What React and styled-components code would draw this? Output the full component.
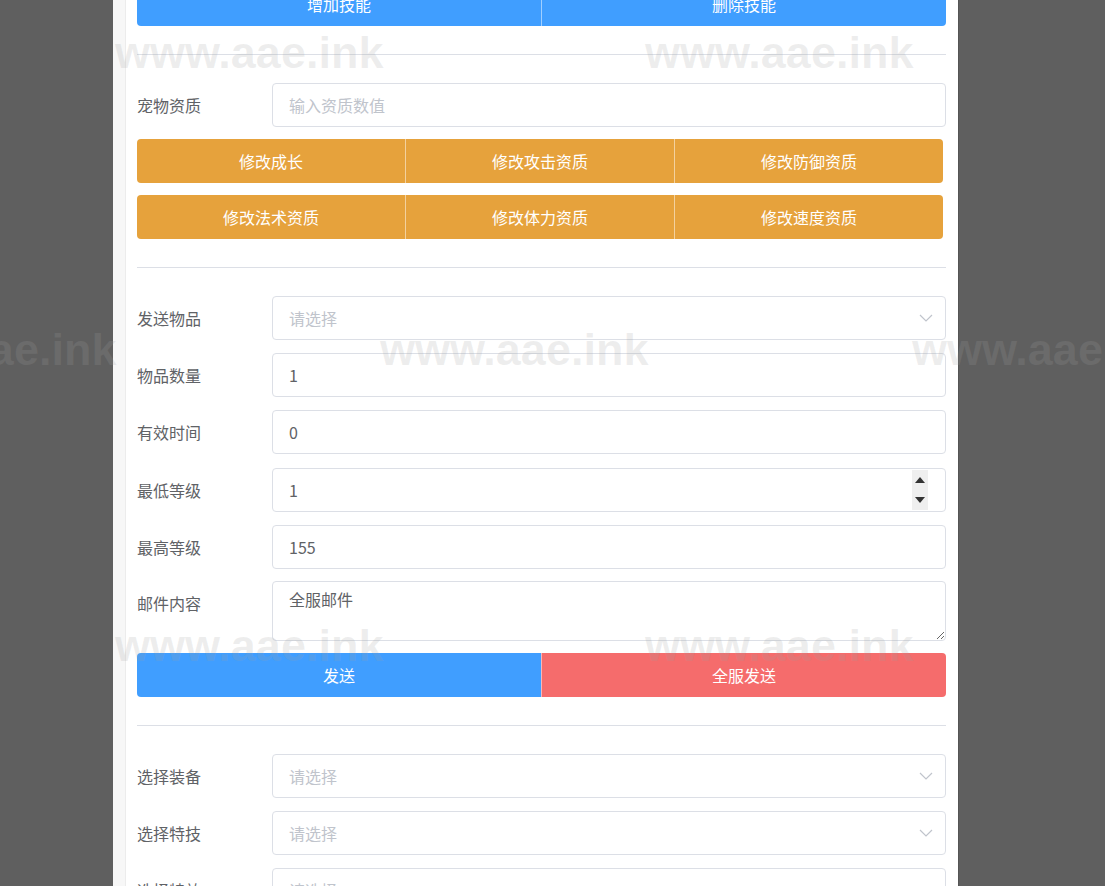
import React from "react";
import styled, { createGlobalStyle } from "styled-components";

const GlobalStyle = createGlobalStyle`
	html, body {
		margin: 0;
		padding: 0;
		overflow: hidden;
	}
	body {
		font-family: "Noto Sans CJK SC", "Noto Sans", sans-serif;
		font-size: 16px;
		color: #606266;
	}
	* {
		box-sizing: border-box;
	}
`;

const Page = styled.div`
	position: relative;
	height: 886px;
	overflow: hidden;
	background-color: #5f5f5f;
	padding-left: 113px;
`;

const Panel = styled.div`
	width: 845px;
	height: 100%;
	overflow: hidden;
	background-color: #f7f7f7;
	padding-left: 12px;
	box-shadow: 1px 0 0 #555;
`;

const Content = styled.div`
	height: calc(100% + 18px);
	background-color: #fff;
	border-left: 1px solid #ececec;
	padding: 0 12px 0 11px;
	margin-top: -18px;
`;

const ButtonGroup = styled.div`
	display: flex;
	width: ${(p) => (p.$narrow ? "calc(100% - 3px)" : "100%")};
	margin-top: ${(p) => p.$top || 0}px;
`;

const tones = {
	primary: "#409eff",
	warning: "#e6a23c",
	danger: "#f56c6c",
};

const Button = styled.button`
	flex: 1;
	height: 44px;
	border: none;
	border-left: 1px solid rgba(255, 255, 255, 0.5);
	background-color: ${(p) => tones[p.$tone]};
	color: #fff;
	font-family: inherit;
	font-size: 16px;
	padding: 0;
	cursor: pointer;

	&:first-child {
		border-left: none;
		border-radius: 4px 0 0 4px;
	}
	&:last-child {
		border-radius: 0 4px 4px 0;
	}
`;

const Divider = styled.div`
	height: 1px;
	background-color: #dcdfe6;
	margin: 28px 0 28px;
`;

const Row = styled.div`
	display: flex;
	align-items: ${(p) => (p.$top ? "flex-start" : "center")};
	margin-bottom: ${(p) => (p.$gap === undefined ? 13 : p.$gap)}px;
`;

const Label = styled.div`
	width: 135px;
	flex-shrink: 0;
	line-height: 44px;
	color: #606266;
	font-size: 16px;
`;

const Field = styled.div`
	flex: 1;
	display: flex;
	align-items: center;
	height: ${(p) => p.$height || 44}px;
	border: 1px solid #dcdfe6;
	border-radius: 4px;
	background-color: #fff;
	padding: 0 ${(p) => (p.$select ? 12 : 16)}px 0 16px;
`;

const Input = styled.input`
	flex: 1;
	min-width: 0;
	height: 100%;
	border: none;
	outline: none;
	padding: 0;
	font-family: inherit;
	font-size: 16px;
	color: #606266;
	background: transparent;

	&::placeholder {
		color: #c0c4cc;
	}
`;

const Placeholder = styled.span`
	flex: 1;
	color: #c0c4cc;
`;

const Spinner = styled.div`
	display: flex;
	flex-direction: column;
	justify-content: space-around;
	align-items: center;
	width: 16px;
	height: 40px;
	margin-right: 1px;
	background-color: #efefef;
`;

const Arrow = styled.span`
	width: 0;
	height: 0;
	border-left: 5px solid transparent;
	border-right: 5px solid transparent;
	${(p) => (p.$down ? "border-top: 6px solid #333;" : "border-bottom: 6px solid #333;")}
`;

const TextArea = styled.textarea`
	flex: 1;
	height: 60px;
	border: 1px solid #dcdfe6;
	border-radius: 4px;
	padding: 5px 16px;
	font-family: inherit;
	font-size: 16px;
	line-height: 1.5;
	color: #606266;
	outline: none;
	resize: vertical;
`;

const Watermarks = styled.div`
	position: absolute;
	inset: 0;
	pointer-events: none;
`;

const Mark = styled.span`
	position: absolute;
	font-family: "Liberation Sans", Arial, sans-serif;
	font-weight: bold;
	font-size: 45px;
	line-height: 1;
	color: rgba(159, 159, 159, 0.19);
	white-space: nowrap;
`;

const Chevron = () => (
	<svg width="14" height="8" viewBox="0 0 14 8" fill="none">
		<path d="M1 1l6 6 6-6" stroke="#c0c4cc" strokeWidth="1.2" />
	</svg>
);

const Select = ({ text = "请选择" }) => (
	<Field $select>
		<Placeholder>{text}</Placeholder>
		<Chevron />
	</Field>
);

const marks = [
	[115, 30],
	[645, 30],
	[-152, 327],
	[380, 327],
	[912, 327],
	[115, 623],
	[645, 623],
];

const App = () => {
	return (
		<>
			<GlobalStyle />
			<Page>
				<Panel>
					<Content>
						<ButtonGroup>
							<Button $tone="primary">增加技能</Button>
							<Button $tone="primary">删除技能</Button>
						</ButtonGroup>
						<Divider />
						<Row $gap={12}>
							<Label>宠物资质</Label>
							<Field>
								<Input placeholder="输入资质数值" />
							</Field>
						</Row>
						<ButtonGroup $narrow>
							<Button $tone="warning">修改成长</Button>
							<Button $tone="warning">修改攻击资质</Button>
							<Button $tone="warning">修改防御资质</Button>
						</ButtonGroup>
						<ButtonGroup $narrow $top={12}>
							<Button $tone="warning">修改法术资质</Button>
							<Button $tone="warning">修改体力资质</Button>
							<Button $tone="warning">修改速度资质</Button>
						</ButtonGroup>
						<Divider />
						<Row>
							<Label>发送物品</Label>
							<Select />
						</Row>
						<Row>
							<Label>物品数量</Label>
							<Field>
								<Input defaultValue="1" />
							</Field>
						</Row>
						<Row $gap={14}>
							<Label>有效时间</Label>
							<Field>
								<Input defaultValue="0" />
							</Field>
						</Row>
						<Row>
							<Label>最低等级</Label>
							<Field>
								<Input defaultValue="1" />
								<Spinner>
									<Arrow />
									<Arrow $down />
								</Spinner>
							</Field>
						</Row>
						<Row $gap={12}>
							<Label>最高等级</Label>
							<Field>
								<Input defaultValue="155" />
							</Field>
						</Row>
						<Row $top $gap={12}>
							<Label>邮件内容</Label>
							<TextArea defaultValue="全服邮件" />
						</Row>
						<ButtonGroup>
							<Button $tone="primary">发送</Button>
							<Button $tone="danger">全服发送</Button>
						</ButtonGroup>
						<Divider />
						<Row>
							<Label>选择装备</Label>
							<Select />
						</Row>
						<Row>
							<Label>选择特技</Label>
							<Select />
						</Row>
						<Row>
							<Label>选择特效</Label>
							<Select />
						</Row>
					</Content>
				</Panel>
				<Watermarks>
					{marks.map(([x, y], i) => (
						<Mark key={i} style={{ left: x, top: y }}>
							www.aae.ink
						</Mark>
					))}
				</Watermarks>
			</Page>
		</>
	);
};

export default App;
